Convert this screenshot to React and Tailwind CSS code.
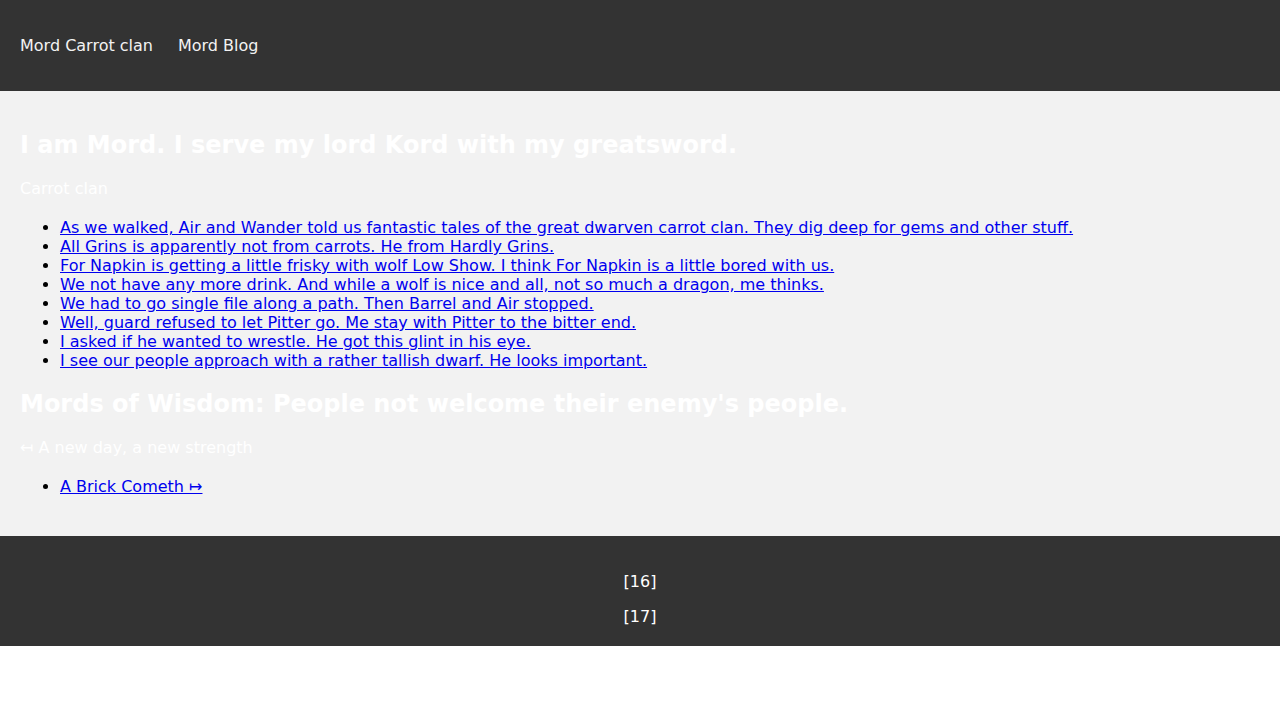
const tales = [
  'As we walked, Air and Wander told us fantastic tales of the great dwarven carrot clan. They dig deep for gems and other stuff.',
  'All Grins is apparently not from carrots. He from Hardly Grins.',
  'For Napkin is getting a little frisky with wolf Low Show. I think For Napkin is a little bored with us.',
  'We not have any more drink. And while a wolf is nice and all, not so much a dragon, me thinks.',
  'We had to go single file along a path. Then Barrel and Air stopped.',
  'Well, guard refused to let Pitter go. Me stay with Pitter to the bitter end.',
  'I asked if he wanted to wrestle. He got this glint in his eye.',
  'I see our people approach with a rather tallish dwarf. He looks important.',
]

export default function App() {
  return (
    <div className="font-['DejaVu_Sans',sans-serif] text-base leading-[normal] text-black">
      {/* Header */}
      <header className="h-[91px] bg-[#333333] flex items-center px-5 gap-[25px] text-[#f2f2f2]">
        <a href="#">Mord Carrot clan</a>
        <a href="#">Mord Blog</a>
      </header>

      {/* Main */}
      <main className="bg-[#f2f2f2] px-5 pt-10 pb-10 flex flex-col gap-5">
        <h2 className="text-2xl font-bold text-white leading-[28px]">
          I am Mord. I serve my lord Kord with my greatsword.
        </h2>
        <p className="text-white leading-[19px]">Carrot clan</p>
        <ul className="list-disc pl-10">
          {tales.map((t) => (
            <li key={t} className="leading-[19px]">
              <a href="#" className="text-[#0000ee] underline">{t}</a>
            </li>
          ))}
        </ul>
        <h2 className="text-2xl font-bold text-white leading-[28px]">
          Mords of Wisdom: People not welcome their enemy's people.
        </h2>
        <p className="text-white leading-[19px]">↤ A new day, a new strength</p>
        <ul className="list-disc pl-10">
          <li className="leading-[19px]">
            <a href="#" className="text-[#0000ee] underline">A Brick Cometh ↦</a>
          </li>
        </ul>
      </main>

      {/* Footer */}
      <footer className="bg-[#333333] text-white pt-9 pb-5 flex flex-col items-center gap-4">
        <p className="leading-[19px]">[16]</p>
        <p className="leading-[19px]">[17]</p>
      </footer>
    </div>
  )
}
